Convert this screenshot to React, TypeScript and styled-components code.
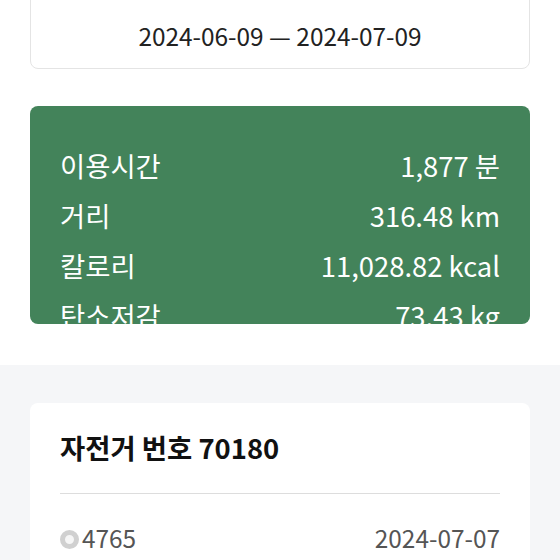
import React from 'react';
import styled, { createGlobalStyle } from 'styled-components';

const GlobalStyle = createGlobalStyle`
  html, body {
    margin: 0;
    padding: 0;
    background: #ffffff;
    font-family: "Noto Sans CJK KR", "Noto Sans", sans-serif;
    color: #222;
  }
`;

const Page = styled.div`
  display: flex;
  flex-direction: column;
  margin-top: -11px;
`;

const TopSection = styled.section`
  display: flex;
  flex-direction: column;
  gap: 37px;
  padding: 0 30px 41px;
  background: #fff;
`;

const PeriodBox = styled.div`
  display: flex;
  align-items: center;
  justify-content: center;
  height: 80px;
  padding-top: 13px;
  box-sizing: border-box;
  border: 1px solid #e4e4e4;
  border-radius: 8px;
  font-size: 24.4px;
  color: #222;
`;

const SummaryCard = styled.div`
  height: 218px;
  box-sizing: border-box;
  padding: 34px 30px 0;
  background: #43835a;
  border-radius: 8px;
  overflow: hidden;
  color: #fff;
`;

const StatRow = styled.div`
  display: flex;
  justify-content: space-between;
  align-items: center;
  height: 50px;
  font-size: 27.4px;
`;

const GraySection = styled.section`
  background: #f5f6f8;
  padding: 38px 30px 40px;
`;

const BikeCard = styled.div`
  background: #fff;
  border-radius: 8px;
  padding: 0 30px;
`;

const BikeTitle = styled.h2`
  margin: 0;
  padding: 24px 0 26px;
  font-size: 27.4px;
  font-weight: 700;
  color: #111;
  border-bottom: 1px solid #dddddd;
`;

const UseRow = styled.div`
  display: flex;
  justify-content: space-between;
  align-items: center;
  padding: 26px 0 30px;
  font-size: 24.4px;
  color: #555;
`;

const Station = styled.span`
  display: flex;
  align-items: center;
  gap: 3px;
`;

const Ring = styled.span`
  display: inline-block;
  flex-shrink: 0;
  width: 9px;
  height: 9px;
  margin-top: 3px;
  border: 5px solid #d0d0d0;
  border-radius: 50%;
  background: #f6f6f6;
`;

const stats = [
  { label: '이용시간', value: '1,877 분' },
  { label: '거리', value: '316.48 km' },
  { label: '칼로리', value: '11,028.82 kcal' },
  { label: '탄소저감', value: '73.43 kg' },
];

export default function App() {
  return (
    <Page>
      <GlobalStyle />
      <TopSection>
        <PeriodBox>2024-06-09 — 2024-07-09</PeriodBox>
        <SummaryCard>
          {stats.map((s) => (
            <StatRow key={s.label}>
              <span>{s.label}</span>
              <span>{s.value}</span>
            </StatRow>
          ))}
        </SummaryCard>
      </TopSection>
      <GraySection>
        <BikeCard>
          <BikeTitle>자전거 번호 70180</BikeTitle>
          <UseRow>
            <Station>
              <Ring />
              4765
            </Station>
            <span>2024-07-07</span>
          </UseRow>
        </BikeCard>
      </GraySection>
    </Page>
  );
}
